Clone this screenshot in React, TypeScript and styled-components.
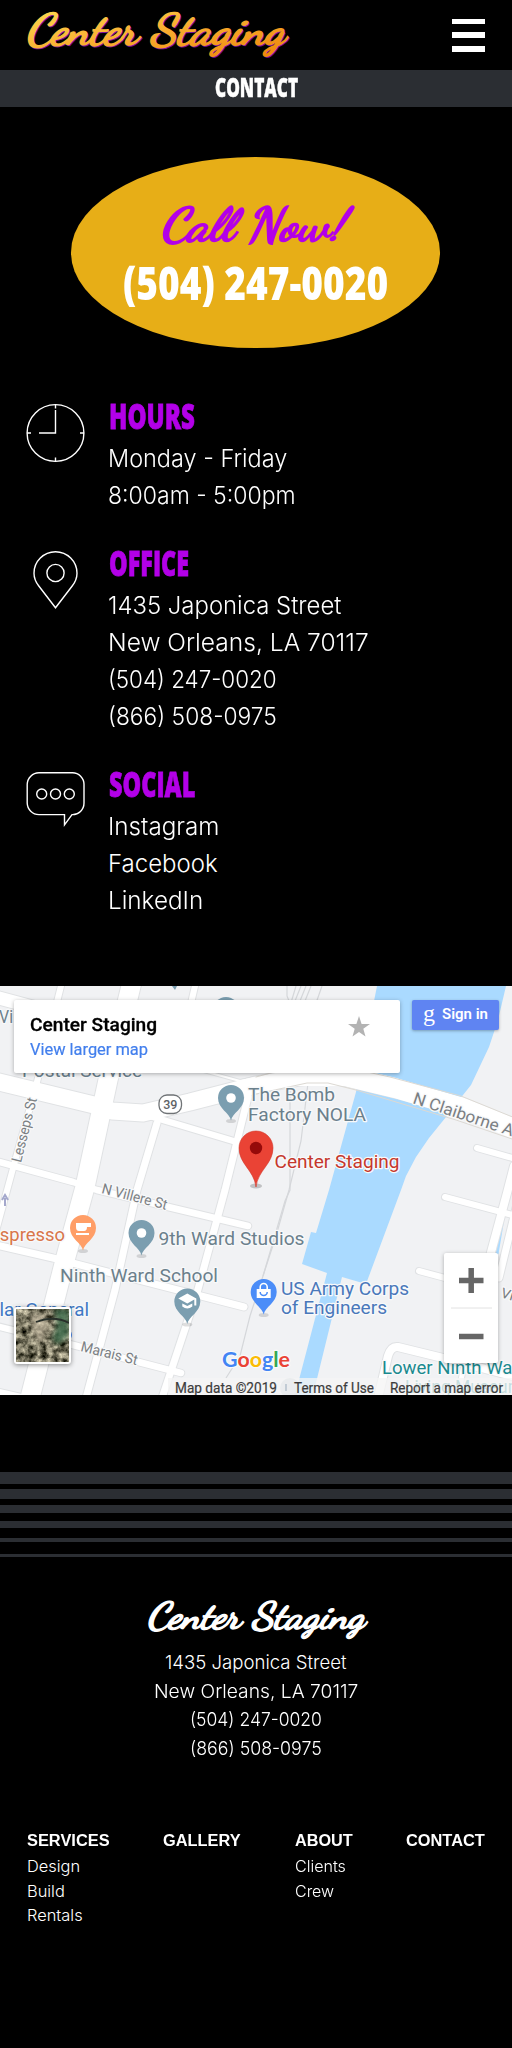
import React, { useLayoutEffect, useRef } from "react";
import styled, { createGlobalStyle } from "styled-components";

const slate = "#2b2e33";
const purple = "#b300e8";
const gold = "#e7ae17";
const light = `Inter, "Liberation Sans", sans-serif`;
const script = `"Dancing Script", "Liberation Serif", cursive`;
const poster = `"Open Sans", "Liberation Sans", sans-serif`;

const Global = createGlobalStyle`
  * { box-sizing: border-box; }
  html, body { margin: 0; background: #000; }
  body { color: #fff; font-family: ${light}; }
  ul, h1, h2, h3, p { margin: 0; padding: 0; list-style: none; font-weight: inherit; }
`;

/* ---------- text squeezed to a measure ---------- */

const FitBox = styled.span<{ $width: number }>`
  display: block;
  width: ${(p) => p.$width}px;
  white-space: nowrap;
`;
const FitInner = styled.span`
  display: inline-block;
  transform-origin: 0 50%;
`;

function Fit({ width, children }: { width: number; children: React.ReactNode }) {
  const ref = useRef<HTMLSpanElement>(null);
  useLayoutEffect(() => {
    const el = ref.current;
    if (el) el.style.transform = `scaleX(${width / el.offsetWidth})`;
  }, [width]);
  return (
    <FitBox $width={width}>
      <FitInner ref={ref}>{children}</FitInner>
    </FitBox>
  );
}

/* ---------- header ---------- */

const Page = styled.div`
  width: 512px;
  height: 2048px;
  overflow: hidden;
  background: #000;
`;
const Header = styled.header`
  height: 70px;
  padding: 0 27px 0 26px;
  display: flex;
  align-items: center;
  justify-content: space-between;
`;
const Logo = styled.svg`
  display: block;
  overflow: visible;
`;
const Burger = styled.button`
  width: 33px;
  height: 33px;
  padding: 0;
  border: 0;
  background: none;
  display: flex;
  flex-direction: column;
  justify-content: space-between;
`;
const BurgerBar = styled.span`
  height: 5.5px;
  width: 100%;
  background: #fff;
`;
const TitleBar = styled.h1`
  height: 37px;
  display: flex;
  justify-content: center;
  background: ${slate};
  font: 800 26.5px/35px ${poster};
  -webkit-text-stroke: 0.5px #fff;
`;

/* ---------- call to action ---------- */

const Cta = styled.a`
  width: 369px;
  height: 191px;
  margin: 50px 0 0 70.5px;
  border-radius: 50%;
  background: ${gold};
  display: flex;
  flex-direction: column;
  align-items: center;
  padding-top: 43px;
`;
const Phone = styled.span`
  margin-top: -2px;
  font: 800 46px/56px ${poster};
  color: #fff;
`;

/* ---------- contact details ---------- */

const Details = styled.main`
  padding: 54px 27px 0 26px;
  display: flex;
  flex-direction: column;
  gap: 35px;
`;
const Section = styled.section`
  display: grid;
  grid-template-columns: 58px 1fr;
  column-gap: 24px;
`;
const LineIcon = styled.svg`
  display: block;
  margin-top: 2px;
  fill: none;
  stroke: #fff;
  stroke-width: 1.4;
  overflow: visible;
`;
const SectionTitle = styled.h2`
  height: 38px;
  padding-left: 1px;
  font: 800 36px/28px ${poster};
  color: ${purple};
  -webkit-text-stroke: 0.8px ${purple};
`;
const SectionLine = styled.li`
  height: 37px;
  font: 350 24px/37px ${light};
`;

/* ---------- map ---------- */

const MapFrame = styled.div`
  position: relative;
  height: 409px;
  margin-top: 67px;
  overflow: hidden;
  font-family: Roboto, sans-serif;
`;
const MapArt = styled.svg`
  display: block;
`;
const PlaceCard = styled.div`
  position: absolute;
  left: 14px;
  top: 14px;
  width: 386px;
  height: 73px;
  padding: 12px 27px 0 16px;
  display: flex;
  justify-content: space-between;
  background: #fff;
  border-radius: 2px;
  box-shadow: 0 1px 4px rgba(0, 0, 0, 0.3);
`;
const PlaceName = styled.p`
  font: 500 19px/25px Roboto, sans-serif;
  color: #000;
  margin-bottom: 1px;
  -webkit-text-stroke: 0.3px #000;
`;
const PlaceLink = styled.p`
  font: 400 16px/24px Roboto, sans-serif;
  color: #427fed;
  -webkit-text-stroke: 0.2px #427fed;
`;
const Star = styled.svg`
  margin: 2px 3px 0 0;
`;
const SignIn = styled.button`
  position: absolute;
  left: 412px;
  top: 14px;
  width: 86.5px;
  height: 29.5px;
  padding: 0 0 0 11px;
  display: flex;
  align-items: center;
  gap: 7px;
  border: 0;
  border-radius: 2px;
  background: #5f84f2;
  color: #fff;
  font: 600 15px/29px Roboto, sans-serif;
  box-shadow: 0 1px 3px rgba(0, 0, 0, 0.3);
`;
const GMark = styled.span`
  width: 12px;
  font: 400 24px/20px "Liberation Serif", serif;
  transform: translateY(-2px);
`;
const ZoomControl = styled.div`
  position: absolute;
  left: 444px;
  top: 266.5px;
  width: 54px;
  height: 110px;
  background: #fff;
  border-radius: 2px;
  box-shadow: 0 1px 4px rgba(0, 0, 0, 0.3);
`;
const Satellite = styled.div`
  position: absolute;
  left: 14px;
  top: 321px;
  width: 57px;
  height: 56.5px;
  padding: 2px;
  background: #fff;
  border-radius: 3px;
  box-shadow: 0 1px 5px rgba(0, 0, 0, 0.45);
`;

/* ---------- footer ---------- */

const Stripes = styled.div`
  padding-top: 77px;
`;
const Stripe = styled.div<{ $height: number; $gap: number }>`
  height: ${(p) => p.$height}px;
  margin-bottom: ${(p) => p.$gap}px;
  background: ${slate};
`;
const Footer = styled.footer`
  display: flex;
  flex-direction: column;
  align-items: center;
  padding-top: 37px;
`;
const Address = styled.ul`
  margin-top: 2px;
  display: flex;
  flex-direction: column;
  align-items: center;
  font: 350 18.6px/28.6px ${light};
`;
const Nav = styled.nav`
  align-self: stretch;
  margin-top: 67px;
  height: 174px;
  padding: 0 27px;
  display: flex;
  justify-content: space-between;
`;
const NavTitle = styled.h3`
  font: 700 16.8px/24.6px "Liberation Sans", sans-serif;
`;
const NavItem = styled.li`
  font: 350 16.4px/24.6px ${light};
`;
const Copyright = styled.p`
  margin-top: 43px;
  font: 300 17px/20px ${light};
`;

/* ---------- drawings ---------- */

const ScriptLogo = ({ width, height, size, baseline, gradient }: { width: number; height: number; size: number; baseline: number; gradient?: boolean }) => {
  const text = {
    fontFamily: script,
    fontWeight: 700,
    fontSize: size,
    textLength: width,
    lengthAdjust: "spacingAndGlyphs" as const,
  };
  const paint = gradient ? "url(#sun)" : "#fff";
  return (
    <Logo width={width} height={height}>
      <defs>
        <linearGradient id="sun" x1="0" y1="0" x2="1" y2="1">
          <stop offset="0" stopColor="#ffdf55" />
          <stop offset="0.5" stopColor="#f9ae30" />
          <stop offset="1" stopColor="#ee8508" />
        </linearGradient>
      </defs>
      <g transform={`translate(0 ${baseline}) skewX(-9)`}>
        {gradient && <text {...text} x={1.2} y={1.2} fill="#7912a0" stroke="#7912a0">Center Staging</text>}
        <text {...text} fill={paint} stroke={paint} strokeWidth={1.3}>Center Staging</text>
      </g>
    </Logo>
  );
};

const ClockIcon = () => (
  <LineIcon width="58" height="60">
    <circle cx="29.5" cy="29" r="28.4" />
    <path d="M29.5 7V29H13M29.5.6v4M29.5 53.4v4M1 29h4M54 29h4M29.5 6v1" />
  </LineIcon>
);
const PinIcon = () => (
  <LineIcon width="58" height="60">
    <path d="M29.5 56.8L12.8 35C9.3 30.5 8 26.5 8 22.2A21.5 21.5 0 0 1 51 22.2C51 26.5 49.7 30.5 46.2 35Z" />
    <circle cx="29.5" cy="22" r="8.6" />
  </LineIcon>
);
const ChatIcon = () => (
  <LineIcon width="58" height="60">
    <path d="M13 .8H46.5A11.5 11.5 0 0 1 58 12.3V31A11.5 11.5 0 0 1 46 42.6L38.5 52.8V42.6H13A11.8 11.8 0 0 1 1.2 31V12.3A11.8 11.8 0 0 1 13 .8Z" />
    <circle cx="15.7" cy="22" r="5" />
    <circle cx="29.5" cy="22" r="5" />
    <circle cx="43.3" cy="22" r="5" />
  </LineIcon>
);

const roads: [string, number][] = [
  ["M-5 11L40 23L150 52", 13],
  ["M61 0L36 100L15 175L-4 245", 6],
  ["M-5 95L94 119L112 125L143 127L190 116L256 99L300 91L323 89L345 91L399 104L461 122L520 145", 17],
  ["M132 -4L108 94L85 201L65 274L30 412", 19],
  ["M195 0L188 30", 6],
  ["M143 128L240 157", 6.5],
  ["M157 137L137 204L115 304L86 412", 7],
  ["M248 111L225 204L197 307L162 412", 7],
  ["M-4 175L73 196L97 204L248 240", 6.5],
  ["M-4 259L53 272L244 321", 7],
  ["M-4 340L73 359L181 387", 6.5],
  ["M-5 407L30 415", 10],
  ["M200 84L240 95M240 95L256 92", 2],
  ["M477 162L516 173", 6],
  ["M514 180L507 207L490 270", 8],
  ["M516 222L499 292", 7],
  ["M445 211L516 230", 6],
  ["M419 285L460 296", 6],
  ["M378 412L388 370Q391 360 398 361L443 372L516 391", 8],
  ["M464 378L458 412", 5],
];

const halo = { stroke: "#f8f9fa", strokeWidth: 2.5, paintOrder: "stroke" as const, strokeLinejoin: "round" as const };

const Label = ({ x, y, w, size = 18, fill = "#6b808c", rotate = 0, children }: { x: number; y: number; w: number; size?: number; fill?: string; rotate?: number; children: string }) => (
  <text
    transform={`translate(${x} ${y}) rotate(${rotate})`}
    fontSize={size}
    fill={fill}
    textLength={w}
    lengthAdjust="spacingAndGlyphs"
    {...halo}
  >
    {children}
  </text>
);

const MapPin = ({ x, y, fill, children }: { x: number; y: number; fill: string; children?: React.ReactNode }) => (
  <g transform={`translate(${x} ${y})`}>
    <ellipse cy="23" rx="5" ry="2" fill="#000" opacity=".13" />
    <path d="M0 22.5C-1.3 15-13 10.5-13 0A13 13 0 0 1 13 0C13 10.5 1.3 15 0 22.5Z" fill={fill} />
    {children ?? <circle r="4.8" fill="#fff" />}
  </g>
);

const MapDrawing = () => (
  <MapArt width="512" height="409" fontFamily="Roboto, sans-serif">
    <rect width="512" height="409" fill="#f1f2f4" />
    <path
      d="M377 0L356 106L329 204L316 247L311 246L302 278L327 287L295 409H313L342 291L342 291L366 298L401 204L406 190L416 171L429 152L446 131L463 109L471 99L489 61L498 34L506 0Z"
      fill="#aadaff"
    />
    <path d="M505 220L497 268" stroke="#aadaff" strokeWidth="3" />
    <g fill="none" stroke="#d5d7da" strokeWidth="1.2">
      <path d="M287 0V10L295 30M296 0L290 20M301 0L293 20M306 0L298 20M311 0L303 20M322 0L315 20" />
      <path d="M308 97L301 155L289 204L276 250L263 290" />
      <path d="M290 105V204L285 215L263 290L250 330L240 370L226 392" />
    </g>
    <g fill="none" strokeLinecap="round" strokeLinejoin="round">
      {roads.map(([d, w]) => <path key={d} d={d} stroke="#e0e2e4" strokeWidth={w + 2} />)}
      {roads.map(([d, w]) => <path key={d} d={d} stroke="#fff" strokeWidth={w} />)}
      <path d="M300 90L345 90L395 102L460 121L520 145" stroke="#fff" strokeWidth="20" />
      <path d="M256 91L300 79L340 80L390 91L461 110L515 132M256 108L307 97L328 97L356 104L456 134L515 154" stroke="#dcd9d3" />
    </g>

    <g fill="#7b9eb0">
      <circle cx="226" cy="24" r="13" />
      <path d="M172 0h5l-2 4z" />
    </g>
    <Label x={-1} y={37} w={14}>Vi</Label>
    <Label x={22} y={91} w={120}>Postal Service</Label>
    <Label x={21} y={177} w={66} size={14.5} fill="#7b7f83" rotate={-76}>Lesseps St</Label>
    <Label x={101} y={207} w={67} size={14.5} fill="#7b7f83" rotate={14.5}>N Villere St</Label>
    <Label x={80} y={365} w={58} size={14.5} fill="#7b7f83" rotate={14}>Marais St</Label>
    <Label x={412} y={117} w={122} size={16.5} fill="#7b7f83" rotate={18.5}>N Claiborne Ave</Label>
    <Label x={500} y={311} w={40} size={14} fill="#7b7f83" rotate={17}>Villere</Label>
    <rect x="159" y="109" width="22.5" height="18.5" rx="8" fill="#fff" stroke="#6f7376" strokeWidth="1.3" />
    <text x="170.3" y="123" fontSize="12.5" fontWeight="500" fill="#5f6367" textAnchor="middle">39</text>
    <path d="M5 220V212M2 214L5 209L8 214" stroke="#a4a8cc" strokeWidth="2" fill="none" />

    <MapPin x={231} y={112} fill="#7b9eb0" />
    <Label x={248} y={115} w={87}>The Bomb</Label>
    <Label x={248} y={134.5} w={118}>Factory NOLA</Label>
    <MapPin x={83} y={242} fill="#ff9e67">
      <path d="M-7-5H8V-1H4Q4 3 1 3H-4Q-7 3-7-1ZM-7 5H6V7H-7Z" fill="#fff" />
    </MapPin>
    <Label x={-10} y={255} w={75} fill="#d9764a">espresso</Label>
    <MapPin x={141.5} y={247} fill="#7b9eb0" />
    <Label x={158.5} y={259} w={146}>9th Ward Studios</Label>
    <Label x={60} y={295.5} w={158}>Ninth Ward School</Label>
    <MapPin x={187.3} y={315.5} fill="#7b9eb0">
      <path d="M0-8L-9-3L0 2L7-2V4H9V-3ZM-5 2V5Q0 9 5 5V2L0 4.5Z" fill="#fff" />
    </MapPin>
    <MapPin x={263.7} y={306} fill="#4b8df8">
      <path d="M-7-3H7V6H-7Z" fill="#fff" />
      <path d="M-3.5-3V-5A3.5 3.5 0 0 1 3.5-5V-3" fill="none" stroke="#fff" strokeWidth="1.6" />
      <path d="M-3.5 0A3.5 3.5 0 0 0 3.5 0" fill="none" stroke="#4b8df8" strokeWidth="1.5" />
    </MapPin>
    <Label x={281} y={309} w={128} fill="#4a78ba">US Army Corps</Label>
    <Label x={281} y={328} w={106} fill="#4a78ba">of Engineers</Label>
    <circle cx="66" cy="349" r="6" fill="#4b8df8" />
    <Label x={-5} y={329.5} w={94} fill="#3f78c4">llar General</Label>
    <Label x={382} y={388} w={147} fill="#1b8a8f">Lower Ninth Ward</Label>
    <Label x={405} y={407} w={118} fill="#1b8a8f">Living Museum</Label>

    <ellipse cx="256" cy="200" rx="6" ry="2.5" fill="#000" opacity=".2" />
    <path d="M256 201C254 184 239 178 239 162A17 17 0 0 1 273 162C273 178 258 184 256 201Z" fill="#ea4335" stroke="#d23a2e" strokeWidth=".6" />
    <circle cx="256" cy="162" r="6.2" fill="#960a0a" />
    <Label x={274.5} y={181.5} w={125} fill="#c5372c">Center Staging</Label>

    <circle cx="290" cy="402" r="10" fill="#c3ced4" />
    <rect x="168" y="392" width="344" height="17" fill="#f5f5f5" opacity=".78" />
    <g fontSize="14" fill="#3c3c3c" stroke="#3c3c3c" strokeWidth=".2">
      <text x="175" y="406.5" textLength="102" lengthAdjust="spacingAndGlyphs">Map data ©2019</text>
      <text x="294" y="406.5" textLength="80" lengthAdjust="spacingAndGlyphs">Terms of Use</text>
      <text x="390" y="406.5" textLength="113" lengthAdjust="spacingAndGlyphs">Report a map error</text>
    </g>
    <path d="M286 398v7" stroke="#9ab" />
    <text x="222" y="381" fontFamily="Lato, sans-serif" fontWeight="700" fontSize="21" textLength="68" lengthAdjust="spacingAndGlyphs" {...halo}>
      <tspan fill="#4285f4">G</tspan>
      <tspan fill="#ea4335">o</tspan>
      <tspan fill="#fbbc05">o</tspan>
      <tspan fill="#4285f4">g</tspan>
      <tspan fill="#34a853">l</tspan>
      <tspan fill="#ea4335">e</tspan>
    </text>
  </MapArt>
);

const SatelliteTile = () => (
  <svg width="53" height="52.5" display="block">
    <defs>
      <filter id="ground" x="0" y="0" width="1" height="1" colorInterpolationFilters="sRGB">
        <feTurbulence type="fractalNoise" baseFrequency=".16" numOctaves="4" seed="8" />
        <feColorMatrix values="1.3 0 0 0 -.18  1.25 0 0 0 -.17  1.15 0 0 0 -.2  0 0 0 0 1" />
      </filter>
      <filter id="soft"><feGaussianBlur stdDeviation="2.5" /></filter>
    </defs>
    <rect width="53" height="53" fill="#777361" />
    <rect width="53" height="53" filter="url(#ground)" />
    <g filter="url(#soft)">
      <path d="M38 0H53V27L42 36L36 30L41 16Z" fill="#3e6b4c" opacity=".85" />
      <path d="M14 4L30 6L33 18L26 33L18 30Z" fill="#cbbfa9" opacity=".6" />
    </g>
    <path d="M20 13Q38 6 53 14" stroke="#29302b" strokeWidth="1.8" fill="none" />
  </svg>
);

/* ---------- content ---------- */

const sections: { title: string; width: number; icon: React.ReactNode; lines: [string, number][] }[] = [
  { title: "HOURS", width: 86, icon: <ClockIcon />, lines: [["Monday - Friday", 179], ["8:00am - 5:00pm", 188]] },
  {
    title: "OFFICE", width: 80, icon: <PinIcon />,
    lines: [["1435 Japonica Street", 233], ["New Orleans, LA 70117", 261], ["(504) 247-0020", 169], ["(866) 508-0975", 169]],
  },
  { title: "SOCIAL", width: 86, icon: <ChatIcon />, lines: [["Instagram", 112], ["Facebook", 110], ["LinkedIn", 95]] },
];
const address: [string, number][] = [
  ["1435 Japonica Street", 182], ["New Orleans, LA 70117", 204], ["(504) 247-0020", 132], ["(866) 508-0975", 132],
];
const stripes = [[12, 5], [10, 6], [8, 8], [7, 10], [4, 12], [3, 0]];
const nav: { title: string; width: number; items: [string, number][] }[] = [
  { title: "SERVICES", width: 83, items: [["Design", 53], ["Build", 38], ["Rentals", 56]] },
  { title: "GALLERY", width: 78, items: [] },
  { title: "ABOUT", width: 58, items: [["Clients", 51], ["Crew", 39]] },
  { title: "CONTACT", width: 79, items: [] },
];

export default function App() {
  return (
    <Page>
      <Global />
      <Header>
        <ScriptLogo width={259} height={56} size={44} baseline={37} gradient />
        <Burger aria-label="Menu"><BurgerBar /><BurgerBar /><BurgerBar /></Burger>
      </Header>
      <TitleBar><Fit width={83}>CONTACT</Fit></TitleBar>

      <Cta>
        <Logo width="190" height="56">
          <g transform="translate(1 40) skewX(-9)">
            <text fontFamily={script} fontWeight="700" fontSize="47" fill={purple} stroke={purple} strokeWidth="1.6" textLength="184" lengthAdjust="spacingAndGlyphs">
              Call Now!
            </text>
          </g>
        </Logo>
        <Phone><Fit width={265}>(504) 247-0020</Fit></Phone>
      </Cta>

      <Details>
        {sections.map((s) => (
          <Section key={s.title}>
            {s.icon}
            <div>
              <SectionTitle><Fit width={s.width}>{s.title}</Fit></SectionTitle>
              <ul>
                {s.lines.map(([t, w]) => <SectionLine key={t}><Fit width={w}>{t}</Fit></SectionLine>)}
              </ul>
            </div>
          </Section>
        ))}
      </Details>

      <MapFrame>
        <MapDrawing />
        <PlaceCard>
          <div>
            <PlaceName><Fit width={127}>Center Staging</Fit></PlaceName>
            <PlaceLink><Fit width={118}>View larger map</Fit></PlaceLink>
          </div>
          <Star width="22" height="24" viewBox="0 0 22 24">
            <path d="M11 2L13.6 10H22L15.3 14.8L17.5 22.5L11 18L4.5 22.5L6.7 14.8L0 10H8.4Z" fill="#b3b3b3" />
          </Star>
        </PlaceCard>
        <SignIn><GMark>g</GMark><Fit width={46}>Sign in</Fit></SignIn>
        <Satellite><SatelliteTile /></Satellite>
        <ZoomControl>
          <svg width="54" height="110" display="block">
            <path d="M15 27.5H39.5M27.2 15V40" stroke="#666" strokeWidth="5.5" />
            <path d="M15 83.5H39.5" stroke="#666" strokeWidth="5.5" />
            <path d="M7 55H48" stroke="#e2e2e2" />
          </svg>
        </ZoomControl>
      </MapFrame>

      <Stripes>
        {stripes.map(([h, g]) => <Stripe key={h} $height={h} $gap={g} />)}
      </Stripes>
      <Footer>
        <ScriptLogo width={218} height={52} size={37.5} baseline={34} />
        <Address>
          {address.map(([t, w]) => <li key={t}><Fit width={w}>{t}</Fit></li>)}
        </Address>
        <Nav>
          {nav.map((n) => (
            <div key={n.title}>
              <NavTitle><Fit width={n.width}>{n.title}</Fit></NavTitle>
              <ul>{n.items.map(([t, w]) => <NavItem key={t}><Fit width={w}>{t}</Fit></NavItem>)}</ul>
            </div>
          ))}
        </Nav>
        <Copyright><Fit width={176}>© 2019 Center Staging</Fit></Copyright>
      </Footer>
    </Page>
  );
}
